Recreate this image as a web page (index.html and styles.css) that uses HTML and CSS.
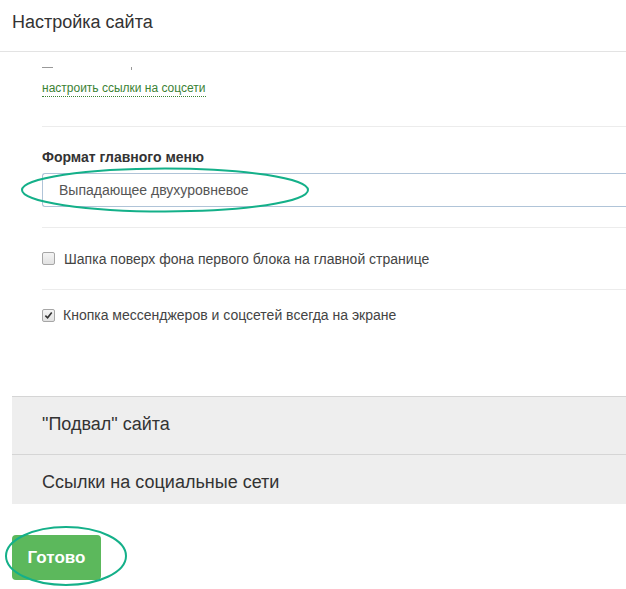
FILE: index.html
```html
<!DOCTYPE html>
<html lang="ru">
<head>
<meta charset="utf-8">
<title>Настройка сайта</title>
<link rel="stylesheet" href="styles.css">
</head>
<body>
<div class="page">
  <div class="header">Настройка сайта</div>
  <div class="content">
    <div class="settings">
      <div class="clip-row"><span class="mark-dash"></span><span class="mark-tick"></span></div>
      <div class="link-row"><a class="dotted-link">настроить ссылки на соцсети</a></div>
      <div class="divider"></div>
      <div class="field">
        <div class="field-label">Формат главного меню</div>
        <div class="select">Выпадающее двухуровневое</div>
      </div>
      <div class="divider"></div>
      <label class="check-row"><span class="cb"></span><span>Шапка поверх фона первого блока на главной странице</span></label>
      <div class="divider"></div>
      <label class="check-row check-row-last"><span class="cb"><svg viewBox="0 0 10 10" width="9" height="9"><path d="M1.5 5.2 L4 7.6 L8.6 1.8" fill="none" stroke="#333" stroke-width="1.8"/></svg></span><span>Кнопка мессенджеров и соцсетей всегда на экране</span></label>
    </div>
    <div class="panels">
      <div class="panel">"Подвал" сайта</div>
      <div class="panel panel-last">Ссылки на социальные сети</div>
    </div>
    <div class="actions">
      <button class="btn-done">Готово</button>
    </div>
  </div>
  <svg class="annot annot-select" width="300" height="50" viewBox="0 0 300 50"><ellipse cx="145" cy="24" rx="143" ry="21.5" fill="none" stroke="#14b089" stroke-width="2"/></svg>
  <svg class="annot annot-btn" width="130" height="66" viewBox="0 0 130 66"><ellipse cx="63" cy="32" rx="60" ry="29" fill="none" stroke="#14b089" stroke-width="2"/></svg>
</div>
</body>
</html>
```
FILE: styles.css
```css
html, body {
  margin: 0;
  padding: 0;
  background: #fff;
}
body {
  font-family: "Liberation Sans", Arial, sans-serif;
  color: #333;
  width: 626px;
  height: 589px;
  overflow: hidden;
}
.page {
  position: relative;
  width: 626px;
  height: 589px;
}
.header {
  height: 52px;
  box-sizing: border-box;
  border-bottom: 1px solid #e3e3e3;
  padding: 12px 12px 0;
  font-size: 18px;
  line-height: 20px;
  color: #333;
}
.content {
  padding-left: 12px;
}
.settings {
  padding-left: 30px;
}
.clip-row {
  height: 24px;
  position: relative;
}
.mark-dash {
  position: absolute;
  left: 0;
  top: 15px;
  width: 11px;
  height: 1px;
  background: #999;
}
.mark-tick {
  position: absolute;
  left: 89px;
  top: 15px;
  width: 1px;
  height: 3px;
  background: #999;
}
.link-row {
  height: 50px;
  padding-top: 2px;
  box-sizing: border-box;
}
.dotted-link {
  font-size: 12px;
  line-height: 14px;
  color: #3b8234;
  border-bottom: 1px dotted #3b8234;
  display: inline-block;
  padding-bottom: 1px;
}
.divider {
  height: 1px;
  background: #ececec;
}
.field {
  padding: 23px 0 20px;
}
.field-label {
  font-size: 14px;
  font-weight: bold;
  line-height: 15px;
  color: #333;
  margin-bottom: 8px;
}
.select {
  height: 34px;
  box-sizing: border-box;
  border: 1px solid #b0c4d8;
  border-right: none;
  border-radius: 3px 0 0 3px;
  padding: 0 16px;
  font-size: 14px;
  line-height: 32px;
  color: #555;
}
.check-row {
  display: flex;
  align-items: center;
  gap: 9px;
  height: 61px;
  font-size: 14px;
  color: #444;
}
.check-row-last {
  height: 106px;
  align-items: flex-start;
  padding-top: 17px;
  box-sizing: border-box;
  gap: 8px;
}
.cb {
  width: 11px;
  height: 11px;
  border: 1px solid #a6a6a6;
  border-radius: 2px;
  background: linear-gradient(#f4f4f4, #e2e2e2);
  display: flex;
  align-items: center;
  justify-content: center;
  flex: none;
}
.check-row-last .cb {
  margin-top: 2px;
}
.panel {
  background: #eeeeee;
  border-top: 1px solid #d5d5d5;
  height: 58px;
  box-sizing: border-box;
  padding: 0 30px;
  font-size: 18px;
  line-height: 55px;
  color: #333;
}
.panel-last {
  height: 50px;
  line-height: 55px;
}
.actions {
  padding-top: 31px;
}
.btn-done {
  width: 89px;
  height: 45px;
  border: none;
  border-radius: 4px;
  background: #5cb85c;
  color: #fff;
  font-family: "Liberation Sans", Arial, sans-serif;
  font-size: 17px;
  font-weight: bold;
  padding: 0;
}
.annot {
  position: absolute;
  pointer-events: none;
}
.annot-select {
  left: 20px;
  top: 166px;
}
.annot-btn {
  left: 3px;
  top: 524px;
}
```
